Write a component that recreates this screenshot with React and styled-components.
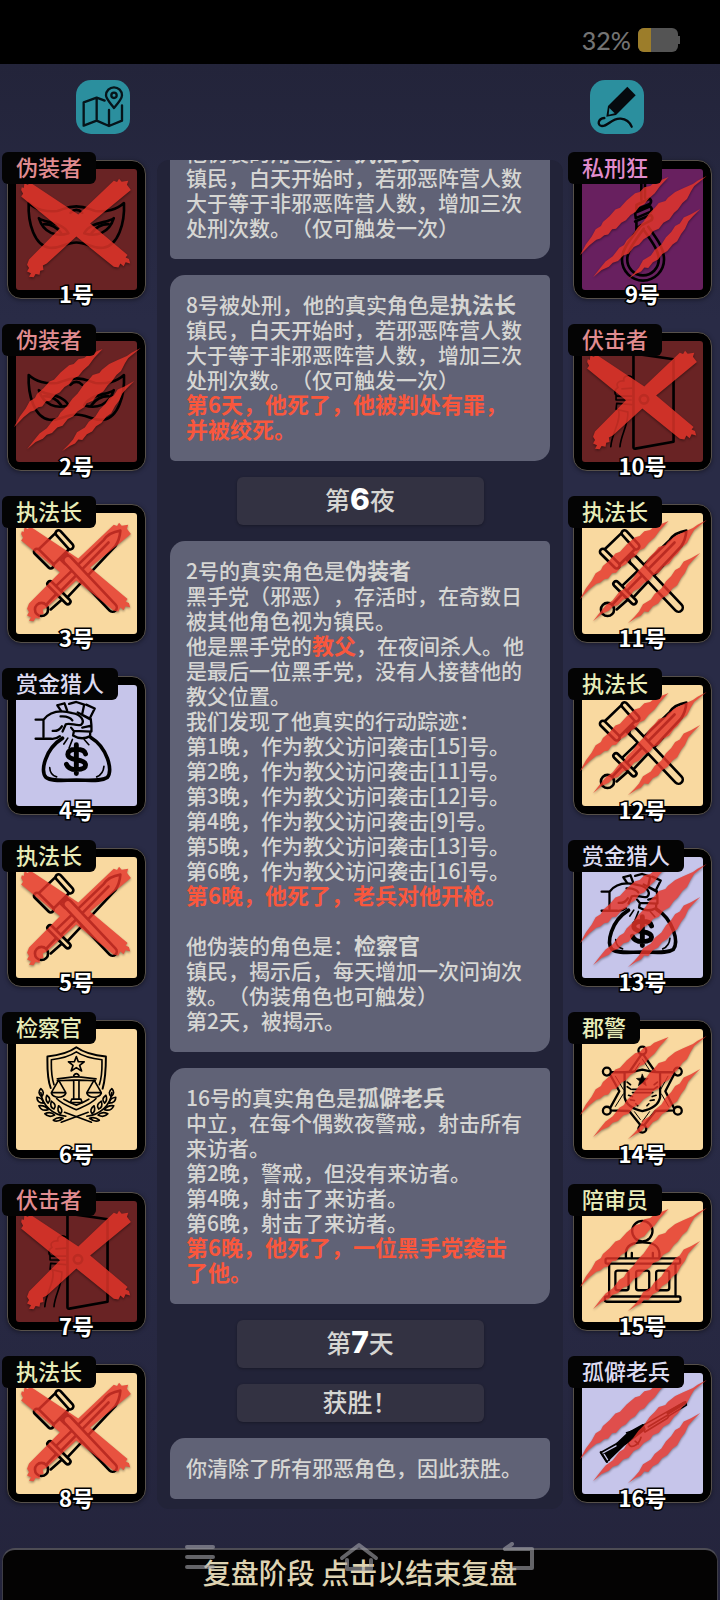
import { Fragment } from 'react';
import styled, { createGlobalStyle, css } from 'styled-components';

const RED = '#692324';
const PURPLE = '#68205f';
const CREAM = '#f9d9a0';
const LAVENDER = '#c6c5ea';

const ROLES = {
  disguiser: { name: '伪装者', color: '#e18c90', bg: RED, Icon: MaskIcon },
  ambusher: { name: '伏击者', color: '#e18c90', bg: RED, Icon: DoorIcon },
  lyncher: { name: '私刑狂', color: '#e08ccc', bg: PURPLE, Icon: NooseIcon },
  marshal: { name: '执法长', color: '#e8ecb8', bg: CREAM, Icon: GavelSwordIcon },
  prosecutor: { name: '检察官', color: '#e8ecb8', bg: CREAM, Icon: ScalesIcon },
  sheriff: { name: '郡警', color: '#e8ecb8', bg: CREAM, Icon: BadgeIcon },
  juror: { name: '陪审员', color: '#e8ecb8', bg: CREAM, Icon: JurorIcon },
  hunter: { name: '赏金猎人', color: '#dcdaf0', bg: LAVENDER, Icon: MoneyBagIcon },
  veteran: { name: '孤僻老兵', color: '#dcdaf0', bg: LAVENDER, Icon: RifleIcon },
};

const LEFT_SEATS = [
  { id: 1, role: 'disguiser', mark: 'cross' },
  { id: 2, role: 'disguiser', mark: 'claw' },
  { id: 3, role: 'marshal', mark: 'cross' },
  { id: 4, role: 'hunter' },
  { id: 5, role: 'marshal', mark: 'cross' },
  { id: 6, role: 'prosecutor' },
  { id: 7, role: 'ambusher', mark: 'cross' },
  { id: 8, role: 'marshal', mark: 'cross' },
];

const RIGHT_SEATS = [
  { id: 9, role: 'lyncher', mark: 'claw' },
  { id: 10, role: 'ambusher', mark: 'cross' },
  { id: 11, role: 'marshal', mark: 'claw' },
  { id: 12, role: 'marshal', mark: 'claw' },
  { id: 13, role: 'hunter', mark: 'claw' },
  { id: 14, role: 'sheriff', mark: 'claw' },
  { id: 15, role: 'juror', mark: 'claw' },
  { id: 16, role: 'veteran', mark: 'claw' },
];

const VISITS = [15, 11, 12, 9, 13, 16];

export default function App() {
  return (
    <Page>
      <GlobalStyle />
      <StatusBar>
        <span>32%</span>
        <Battery><BatteryLevel /></Battery>
      </StatusBar>

      <Header>
        <IconButton type="button" aria-label="地图"><MapIcon /></IconButton>
        <IconButton type="button" aria-label="笔记"><PencilIcon /></IconButton>
      </Header>

      <Board>
        <SeatColumn>
          {LEFT_SEATS.map(seat => <Seat key={seat.id} {...seat} />)}
        </SeatColumn>

        <Log>
          <Card>
            他伪装的角色是：<Name>执法长</Name><br />
            镇民，白天开始时，若邪恶阵营人数大于等于非邪恶阵营人数，增加三次处刑次数。（仅可触发一次）
          </Card>
          <Card>
            8号被处刑，他的真实角色是<Name>执法长</Name><br />
            镇民，白天开始时，若邪恶阵营人数大于等于非邪恶阵营人数，增加三次处刑次数。（仅可触发一次）<br />
            <Death>第6天，他死了，他被判处有罪，并被绞死。</Death>
          </Card>
          <Phase>第<b>6</b>夜</Phase>
          <Card>
            2号的真实角色是<Name>伪装者</Name><br />
            黑手党（邪恶），存活时，在奇数日被其他角色视为镇民。<br />
            他是黑手党的<Death>教父</Death>，在夜间杀人。他是最后一位黑手党，没有人接替他的教父位置。<br />
            我们发现了他真实的行动踪迹：<br />
            {VISITS.map((target, i) => (
              <Fragment key={target}>第{i + 1}晚，作为教父访问袭击[{target}]号。<br /></Fragment>
            ))}
            <Death>第6晚，他死了，老兵对他开枪。</Death><br />
            <br />
            他伪装的角色是：<Name>检察官</Name><br />
            镇民，揭示后，每天增加一次问询次数。（伪装角色也可触发）<br />
            第2天，被揭示。
          </Card>
          <Card>
            16号的真实角色是<Name>孤僻老兵</Name><br />
            中立，在每个偶数夜警戒，射击所有来访者。<br />
            第2晚，警戒，但没有来访者。<br />
            第4晚，射击了来访者。<br />
            第6晚，射击了来访者。<br />
            <Death>第6晚，他死了，一位黑手党袭击了他。</Death>
          </Card>
          <Phase>第<b>7</b>天</Phase>
          <Phase $small>获胜！</Phase>
          <Card>你清除了所有邪恶角色，因此获胜。</Card>
        </Log>

        <SeatColumn $right>
          {RIGHT_SEATS.map(seat => <Seat key={seat.id} {...seat} />)}
        </SeatColumn>
      </Board>

      <Footer>
        <EndButton type="button">复盘阶段 点击以结束复盘</EndButton>
        <SystemNav>
          <svg width="32" height="30" viewBox="0 0 32 30"><path d="M3 5h26M3 15h26M3 25h26" /></svg>
          <svg width="40" height="30" viewBox="0 0 40 30"><path d="M3 16L20 3l17 13M8 18v9h24v-9" /></svg>
          <svg width="34" height="30" viewBox="0 0 34 30"><path d="M10 2L3 7h27v19H12" /></svg>
        </SystemNav>
      </Footer>
    </Page>
  );
}

function Seat({ id, role, mark }) {
  const { name, color, bg, Icon } = ROLES[role];
  return (
    <SeatBox $bg={bg}>
      <SeatArt viewBox="0 0 417 417">
        <Icon bg={bg} />
        {mark === 'cross' && <CrossMark />}
        {mark === 'claw' && <ClawMark />}
      </SeatArt>
      <RoleTag $color={color}>{name}</RoleTag>
      <SeatNumber>{id}号</SeatNumber>
    </SeatBox>
  );
}

function CrossMark() {
  return (
    <Mark d="M40 88L42 80 48 82 50 68 60 73 68 66 80 74 214 163 322 60 332 64 338 54 346 63 366 60 362 72 374 88 362 98 250 190 364 286 358 294 368 298 372 312 358 308 352 320 342 312 336 324 322 322 208 230 118 312 106 318 108 332 98 334 96 346 84 344 78 354 64 352 70 342 58 336 64 326 58 316 64 300 158 205 40 108 46 100Z" />
  );
}

function ClawMark() {
  return (
    <>
      <Mark d="M288 49L244 66 232 76 214 80 200 94 186 98 160 120 140 142 126 148 108 168 88 186 82 198 66 208 54 230 36 254 18 287 48 256 68 240 80 236 92 226 104 224 116 208 128 206 144 188 158 180 172 164 186 156 200 138 214 132 228 114 246 98 262 76Z" />
      <Mark d="M404 46L376 60 362 70 334 82 308 94 286 112 278 122 258 128 246 142 230 158 212 184 196 200 180 222 160 242 152 256 138 264 118 290 96 306 78 328 58 354 84 332 106 322 118 310 134 304 150 288 166 282 182 262 198 254 212 238 232 226 240 214 258 206 272 188 290 178 304 158 316 148 330 128 344 116 356 92 366 76Z" />
      <Mark d="M384 146L356 162 334 172 322 190 308 198 296 216 280 232 266 254 246 270 234 288 210 302 198 324 184 340 164 360 188 344 204 336 214 324 226 326 240 308 256 300 268 284 284 274 300 254 314 244 326 222 338 206 348 184 362 168Z" />
    </>
  );
}

function MaskIcon() {
  return (
    <Lines $width={8}>
      <path d="M63 128C84 148 118 156 150 152 168 148 178 138 208 138S248 148 266 152C298 156 332 148 353 128 356 190 335 258 290 264 258 268 240 248 208 248S158 268 126 264C81 258 60 190 63 128Z" />
      <path d="M94 174C114 190 166 184 184 220 148 232 108 220 94 174ZM322 174C302 190 250 184 232 220 268 232 308 220 322 174Z" />
      <path d="M110 192C130 192 150 202 162 220M306 192C286 192 266 202 254 220M190 158Q208 140 226 158" />
    </Lines>
  );
}

function DoorIcon() {
  return (
    <Lines $width={8}>
      <path d="M181 60V348Q181 353 187 352L303 331V80L181 62" />
      <circle cx="213" cy="202" r="13" />
      <path d="M176 134C160 126 148 134 152 146 136 144 126 154 134 166 122 172 122 188 132 192M176 168L146 170M176 192H128V204H174M176 218L130 214 128 232 162 240M136 236C144 270 116 300 112 346M164 240C166 280 142 310 140 346" strokeWidth="5" />
    </Lines>
  );
}

function NooseIcon() {
  return (
    <Lines $width={8}>
      <path d="M205 60V118M216 60V112" />
      <path d="M190 134L230 114Q238 120 232 130L190 148ZM186 158L232 138Q240 146 234 154L188 174ZM186 184L234 164Q242 172 236 180L198 200M190 186V210" />
      <path d="M204 196C168 244 146 268 146 300A64 64 0 0 0 274 300C274 268 258 244 226 200" />
      <path d="M212 206C180 252 162 274 162 300A48 48 0 0 0 258 300C258 276 244 254 214 212" />
    </Lines>
  );
}

// outlined rod with round ends
function Rod({ d, bg, size = 28 }) {
  return (
    <>
      <path d={d} strokeWidth={size} />
      <path d={d} strokeWidth={size - 16} stroke={bg} />
    </>
  );
}

function GavelSwordIcon({ bg }) {
  return (
    <Lines $width={8}>
      <path d="M136 256L292 106Q306 84 342 78 340 106 326 126L180 282Z" fill={bg} />
      <path d="M306 114L160 262M148 270L118 302M166 286L130 318" />
      <Rod d="M128 240L182 294" bg={bg} size={24} />
      <circle cx="102" cy="318" r="20" fill={bg} />
      <path d="M146 84L92 136 138 182 190 130Z" fill={bg} />
      <Rod d="M154 86L190 126" bg={bg} size={26} />
      <Rod d="M88 142L130 184" bg={bg} size={26} />
      <path d="M160 166L178 148 192 162 174 180Z" fill={bg} />
      <Rod d="M182 168L318 312" bg={bg} size={34} />
    </Lines>
  );
}

function MoneyBagIcon() {
  return (
    <Lines $width={8}>
      <path d="M166 186C112 220 98 286 116 306 132 318 162 314 208 314S284 318 302 306C320 284 302 214 252 184" strokeWidth="11" />
      <path d="M127 276Q128 298 148 304M292 272Q290 296 270 304M182 186L170 204M196 190L186 216M232 190L246 206" strokeWidth="5" />
      <path d="M84 130H108M84 188H130M108 130V182M108 130C130 102 160 100 196 110 222 114 236 134 222 146 206 150 190 138 176 144L166 166M160 120Q186 118 196 132M136 164Q154 166 164 150M130 188Q146 190 158 180" strokeWidth="7" />
      <path d="M150 86L172 80 180 102M186 82L208 76 232 84 226 112M238 84L264 96 248 128 226 116M212 108L252 128 254 148 226 154M254 150V166L200 164 192 154M200 168L198 178Q224 194 250 180V166M150 86L162 104" strokeWidth="7" />
      <path d="M236 234Q232 220 208 220 182 220 182 236 182 248 208 252 236 256 236 268 236 282 208 282 184 282 178 266M208 206V294" strokeWidth="15" />
    </Lines>
  );
}

function Laurel({ flip }) {
  return (
    <g transform={flip ? 'translate(416 0) scale(-1 1)' : undefined}>
      <path d="M100 218C104 258 138 286 176 290M162 308L244 278" />
      <path d="M100 206Q88 218 102 230 114 218 100 206ZM88 232Q88 250 108 250 106 234 88 232ZM118 226Q112 240 122 250 134 238 118 226ZM94 258Q102 276 122 270 114 256 94 258ZM132 244Q126 262 140 268 150 256 132 244ZM112 282Q124 296 142 286 130 274 112 282ZM154 258Q148 274 160 282 170 270 154 258ZM138 302Q150 310 168 296 152 290 138 302Z" />
    </g>
  );
}

function ScalesIcon() {
  return (
    <Lines $width={6}>
      <path d="M130 204C118 172 120 138 120 108 162 104 186 96 208 80 230 96 254 104 298 108 298 138 298 172 288 206" />
      <path d="M140 194C130 164 132 142 132 118 168 114 190 106 208 94 226 106 250 114 286 118 286 142 288 164 278 194" strokeWidth="5" />
      <path d="M208 108L214 124 232 124 218 135 224 152 208 142 192 152 198 135 184 124 202 124Z" strokeWidth="5" />
      <path d="M150 176L200 170H216L268 176M150 182L200 180H216L266 182M200 182V234M216 182V234M200 166Q208 154 216 166M194 238H222L226 248H190Z" strokeWidth="5" />
      <path d="M154 180L132 218H176ZM132 220Q138 232 154 232T176 220M262 180L240 218H284ZM240 220Q246 232 262 232T284 220M148 236C162 252 190 262 208 270 226 262 254 252 268 236M170 238Q190 250 208 256 226 250 246 238" strokeWidth="5" />
      <g strokeWidth="5"><Laurel /><Laurel flip /></g>
    </Lines>
  );
}

function BadgeIcon({ bg }) {
  return (
    <Lines $width={7}>
      <path d="M208 98L248 156 308 156 278 214 308 272 248 274 208 324 168 274 106 272 138 214 106 156 168 156Z" />
      <path d="M208 116L234 156M182 156L200 128M286 168L264 208M126 168L150 208M126 260L150 222M288 260L266 222M208 306L230 276M184 276L202 300" strokeWidth="3" />
      <path d="M154 156Q180 156 208 148 236 156 262 156V232Q256 264 208 274 160 264 154 232Z" fill={bg} />
      <path d="M208 162L213 174 226 175 216 183 220 197 208 189 196 197 200 183 190 175 203 174Z" fill="#000" strokeWidth="2" />
      <path d="M178 208H240M178 218H240M162 186L172 194M162 200L174 208M166 226L178 230M172 240L184 242M254 186L244 194M254 200L242 208M250 226L238 230M244 240L232 242M188 252L194 258M228 252L222 258" strokeWidth="5" />
      {[[208, 90], [316, 154], [316, 273], [208, 328], [100, 273], [100, 154]].map(([cx, cy]) => (
        <circle key={`${cx}-${cy}`} cx={cx} cy={cy} r="12" fill={bg} />
      ))}
    </Lines>
  );
}

function JurorIcon() {
  return (
    <Lines $width={7}>
      <circle cx="208" cy="116" r="31" />
      <path d="M158 198V180C160 154 184 150 208 150S258 154 260 184V198M176 198V182M240 198V182" />
      <rect x="96" y="199" width="227" height="16" rx="5" />
      <path d="M107 216V314M309 216V314" />
      <rect x="94" y="315" width="230" height="16" rx="5" />
      <rect x="126" y="236" width="40" height="60" rx="7" />
      <rect x="189" y="236" width="40" height="60" rx="7" />
      <rect x="250" y="236" width="40" height="60" rx="7" />
    </Lines>
  );
}

function RifleIcon() {
  return (
    <Lines $width={5}>
      <path d="M82 266L132 238 154 242 100 294Z" fill="#000" />
      <path d="M82 266L100 294M90 266L106 288" strokeWidth="8" />
      <path d="M88 268L128 246M92 272L102 288" stroke="#c6c5ea" strokeWidth="4" />
      <path d="M132 238L166 206 210 182 216 196 168 232 154 242Z" fill="#000" />
      <path d="M160 206L176 202M170 216L208 192M166 238Q170 252 184 246T204 220M186 232L196 240" />
      <path d="M206 186L330 116 340 112 342 122 290 154 284 162 216 204ZM226 188L286 152M292 140L334 118" />
      <path d="M286 146L336 116" strokeWidth="10" />
    </Lines>
  );
}

function MapIcon() {
  return (
    <svg width="54" height="54" viewBox="0 0 162 162" fill="none" stroke="#06141a" strokeWidth="7" strokeLinejoin="round" strokeLinecap="round">
      <path d="M86 62L62 53 23 67V137L62 122 99 138 138 122V76M62 53V122M99 90V138" />
      <path d="M114 84C100 66 90 56 90 46A24 24 0 0 1 138 46C138 56 128 68 114 84Z" />
      <circle cx="114" cy="46" r="8" />
    </svg>
  );
}

function PencilIcon() {
  return (
    <svg width="54" height="54" viewBox="0 0 162 162" fill="#050a0e">
      <path d="M112 20L137 46 78 105 49 110 54 78Z" />
      <path d="M58 84L74 100 56 104Z" fill="#2b8f9e" />
      <path d="M43 114C24 116 20 136 36 138 56 138 64 114 92 116 112 118 120 128 125 140" fill="none" stroke="#050a0e" strokeWidth="7" strokeLinecap="round" />
    </svg>
  );
}

const GlobalStyle = createGlobalStyle`
  * {
    box-sizing: border-box;
  }
  body {
    margin: 0;
    background: #24243b;
    font-family: "Noto Sans CJK SC", "Noto Sans", sans-serif;
    font-weight: 500;
    text-spacing-trim: space-all;
  }
  button {
    font-family: inherit;
    font-weight: inherit;
    border: none;
    cursor: pointer;
  }
`;

const Page = styled.div`
  min-height: 100vh;
  display: flex;
  flex-direction: column;
  background: linear-gradient(#23243a 64px, #292b46 320px, #292b46 70%, #24243c);
`;

const StatusBar = styled.div`
  height: 64px;
  padding: 16px 40px 0 0;
  display: flex;
  align-items: center;
  justify-content: flex-end;
  gap: 7px;
  background: #000;
  color: #737373;
  font-family: Lato, sans-serif;
  font-size: 25px;
`;

const Battery = styled.div`
  width: 40px;
  height: 24px;
  margin-right: 2px;
  position: relative;
  display: flex;
  border-radius: 6px;
  background: #545454;

  &::after {
    content: '';
    position: absolute;
    right: -2px;
    top: 8px;
    width: 2px;
    height: 8px;
    background: #545454;
  }
`;

const BatteryLevel = styled.div`
  width: 32%;
  border-radius: 6px 0 0 6px;
  background: #9c7d2a;
`;

const Header = styled.header`
  height: 96px;
  padding: 16px 76px;
  display: flex;
  justify-content: space-between;
`;

const IconButton = styled.button`
  width: 54px;
  height: 54px;
  padding: 0;
  border-radius: 15px;
  background: #2b8f9e;

  svg {
    display: block;
  }
`;

const Board = styled.main`
  display: grid;
  grid-template-columns: 157fr 406fr 157fr;
`;

const SeatColumn = styled.section`
  display: flex;
  flex-direction: column;
  gap: 33px;
  padding: ${props => (props.$right ? '0 8px 6px 10px' : '0 11px 6px 7px')};
`;

const SeatBox = styled.article`
  position: relative;
  aspect-ratio: 1;
  border-radius: 14px;
  border: 1px solid #56504a;
  background: #000;
  box-shadow: 0 1px 4px rgba(0, 0, 0, 0.4);

  &::before {
    content: '';
    position: absolute;
    inset: 8px;
    border-radius: 3px;
    background: ${props => props.$bg};
  }
`;

const SeatArt = styled.svg`
  position: absolute;
  inset: 0;
`;

const Lines = styled.g`
  fill: none;
  stroke: #000;
  stroke-width: ${props => props.$width}px;
  stroke-linecap: round;
  stroke-linejoin: round;
`;

const Mark = styled.path`
  fill: #e5352a;
  opacity: 0.82;
  filter: drop-shadow(0 4px 4px rgba(0, 0, 0, 0.5));
`;

const RoleTag = styled.span`
  position: absolute;
  top: -9px;
  left: -6px;
  padding: 0 14px 4px;
  border-radius: 6px;
  background: #040404;
  color: ${props => props.$color};
  font-size: 22px;
  line-height: 28px;
  white-space: nowrap;
`;

const SeatNumber = styled.span`
  position: absolute;
  left: 0;
  right: 0;
  bottom: -9px;
  color: #fff;
  font-size: 22px;
  font-weight: 700;
  line-height: 28px;
  text-align: center;
  -webkit-text-stroke: 3px #000;
  paint-order: stroke fill;
`;

const Log = styled.section`
  contain: size;
  overflow: hidden;
  display: flex;
  flex-direction: column;
  justify-content: flex-end;
  align-items: center;
  gap: 16px;
  padding: 0 13px 10px;
  border-radius: 12px;
  background: #222338;
`;

const Card = styled.article`
  flex-shrink: 0;
  width: 100%;
  padding: 17px 24px 19px 16px;
  border-radius: 15px 5px 15px 5px;
  background: #606276;
  color: #d6d6d3;
  font-size: 21px;
  line-height: 25px;
`;

const strong = css`
  font-size: 22px;
  font-weight: 700;
  line-height: 1;
`;

const Name = styled.b`
  ${strong}
`;

const Death = styled.b`
  ${strong}
  color: #f9573d;
`;

const Phase = styled.h2`
  flex-shrink: 0;
  width: 65%;
  margin: 0;
  padding-bottom: 3px;
  display: flex;
  align-items: center;
  justify-content: center;
  border-radius: 6px;
  background: #333242;
  color: #d6d6d3;
  font-size: 25px;
  font-weight: 500;
  line-height: ${props => (props.$small ? '35px' : '45px')};
  box-shadow: 0 1px 3px rgba(0, 0, 0, 0.3);

  b {
    color: #fff;
    font-family: Inter, sans-serif;
    font-size: 30px;
    font-weight: 800;
  }
`;

const Footer = styled.footer`
  position: relative;
  flex: 1;
  display: flex;
  margin-top: 39px;
  padding: 0 2px;
`;

const EndButton = styled.button`
  flex: 1;
  height: 52px;
  padding: 0 0 6px;
  border-top: 2px solid #4d4c54;
  border-left: 1px solid #3e3d45;
  border-right: 1px solid #3e3d45;
  border-radius: 13px 13px 0 0;
  background: #040303;
  color: #ded3b2;
  font-size: 28px;
  line-height: 44px;
`;

const SystemNav = styled.div`
  position: absolute;
  top: -6px;
  left: 184px;
  right: 184px;
  display: flex;
  justify-content: space-between;
  pointer-events: none;

  svg {
    fill: none;
    stroke: rgba(165, 165, 172, 0.6);
    stroke-width: 4px;
    stroke-linecap: round;
    stroke-linejoin: round;
  }
`;
